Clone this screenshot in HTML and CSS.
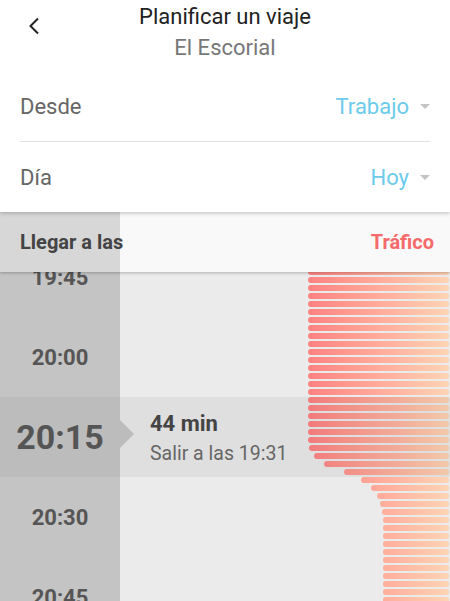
FILE: index.html
```html
<html>
<head>
    <meta charset="utf-8">
    <title>Planificar un viaje</title>
    <link rel="stylesheet" href="styles.css">
</head>
<body>
    <div class="top">
        <div class="header">
            <div class="back">
                <svg width="12" height="18" viewBox="0 0 12 18"><path d="M10 1.5 L2.5 9 L10 16.5" fill="none" stroke="#222" stroke-width="2"/></svg>
            </div>
            <div class="titles">
                <div class="title">Planificar un viaje</div>
                <div class="subtitle">El Escorial</div>
            </div>
            <div></div>
        </div>
        <div class="form">
            <div class="field">
                <span class="label">Desde</span>
                <span class="value">Trabajo<span class="caret"></span></span>
            </div>
            <div class="field">
                <span class="label">Día</span>
                <span class="value">Hoy<span class="caret"></span></span>
            </div>
        </div>
    </div>

    <div class="timeline">
        <div class="bar-head">
            <span class="arrive">Llegar a las</span>
            <span class="traffic">Tráfico</span>
        </div>

        <div class="chart">
            <div class="b" style="margin-left:1px"></div>
            <div class="b" style="margin-left:1px"></div>
            <div class="b" style="margin-left:1px"></div>
            <div class="b" style="margin-left:1px"></div>
            <div class="b" style="margin-left:1px"></div>
            <div class="b" style="margin-left:1px"></div>
            <div class="b" style="margin-left:1px"></div>
            <div class="b" style="margin-left:1px"></div>
            <div class="b" style="margin-left:1px"></div>
            <div class="b" style="margin-left:1px"></div>
            <div class="b" style="margin-left:1px"></div>
            <div class="b" style="margin-left:1px"></div>
            <div class="b" style="margin-left:1px"></div>
            <div class="b" style="margin-left:1px"></div>
            <div class="b" style="margin-left:1px"></div>
            <div class="b" style="margin-left:1px"></div>
            <div class="b" style="margin-left:1px"></div>
            <div class="b" style="margin-left:1px"></div>
            <div class="b" style="margin-left:1px"></div>
            <div class="b" style="margin-left:1px"></div>
            <div class="b" style="margin-left:1px"></div>
            <div class="b" style="margin-left:1px"></div>
            <div class="b" style="margin-left:1px"></div>
            <div class="b" style="margin-left:1px"></div>
            <div class="b" style="margin-left:1px"></div>
            <div class="b" style="margin-left:1px"></div>
            <div class="b" style="margin-left:1px"></div>
            <div class="b" style="margin-left:1px"></div>
            <div class="b" style="margin-left:1px"></div>
            <div class="b" style="margin-left:2px"></div>
            <div class="b" style="margin-left:7px"></div>
            <div class="b" style="margin-left:17px"></div>
            <div class="b" style="margin-left:37px"></div>
            <div class="b" style="margin-left:54px"></div>
            <div class="b" style="margin-left:64px"></div>
            <div class="b" style="margin-left:70px"></div>
            <div class="b" style="margin-left:73px"></div>
            <div class="b" style="margin-left:75px"></div>
            <div class="b" style="margin-left:76px"></div>
            <div class="b" style="margin-left:76px"></div>
            <div class="b" style="margin-left:76px"></div>
            <div class="b" style="margin-left:76px"></div>
            <div class="b" style="margin-left:76px"></div>
            <div class="b" style="margin-left:76px"></div>
            <div class="b" style="margin-left:76px"></div>
            <div class="b" style="margin-left:76px"></div>
            <div class="b" style="margin-left:76px"></div>
            <div class="b" style="margin-left:76px"></div>
            <div class="b" style="margin-left:76px"></div>
        </div>

        <div class="rows">
            <div class="row">
                <div class="time">19:45</div>
                <div class="info"></div>
            </div>
            <div class="row">
                <div class="time">20:00</div>
                <div class="info"></div>
            </div>
            <div class="row sel">
                <div class="time">20:15</div>
                <div class="info">
                    <div class="dur">44 min</div>
                    <div class="leave">Salir a las 19:31</div>
                </div>
            </div>
            <div class="row">
                <div class="time">20:30</div>
                <div class="info"></div>
            </div>
            <div class="row">
                <div class="time">20:45</div>
                <div class="info"></div>
            </div>
        </div>
    </div>
</body>
</html>
```

FILE: styles.css
```css
body {
    margin: 0;
    width: 450px;
    height: 601px;
    overflow: hidden;
    font-family: Roboto, "Liberation Sans", sans-serif;
    background-color: #ebebeb;
}

.top {
    position: relative;
    z-index: 4;
    background-color: white;
    box-shadow: 0 1px 4px rgba(0, 0, 0, 0.25);
}

.header {
    display: grid;
    grid-template-columns: 68px 1fr 68px;
    padding-top: 1px;
}

.back {
    padding: 16px 0 0 28px;
}

.titles {
    text-align: center;
    font-size: 22px;
    line-height: 31px;
}

.title {
    color: #222;
}

.subtitle {
    color: #777;
}

.form {
    padding: 9px 20px 0;
}

.field {
    display: flex;
    justify-content: space-between;
    align-items: center;
    height: 69px;
    font-size: 22px;
}

.field + .field {
    border-top: 1px solid #e2e2e2;
    height: 70px;
}

.label {
    color: #666;
}

.value {
    display: flex;
    align-items: center;
    color: #6ccbea;
}

.caret {
    width: 0;
    height: 0;
    margin-left: 11px;
    border-left: 5px solid transparent;
    border-right: 5px solid transparent;
    border-top: 5px solid #c4c4c4;
}

.timeline {
    position: relative;
    height: 389px;
    overflow: hidden;
    background: linear-gradient(to right, #c4c4c4 120px, #ebebeb 120px);
}

.bar-head {
    position: absolute;
    top: 0;
    left: 0;
    right: 0;
    z-index: 3;
    height: 60px;
    display: flex;
    justify-content: space-between;
    align-items: center;
    padding: 0 16px 0 20px;
    font-size: 20px;
    font-weight: bold;
    background: linear-gradient(to right, #d7d7d7 120px, #f9f9f9 120px);
    box-shadow: 0 1px 3px rgba(0, 0, 0, 0.25);
}

.arrive {
    color: #444;
}

.traffic {
    color: #f56b6b;
}

.chart {
    position: absolute;
    top: 1px;
    left: 307px;
    right: 1px;
    z-index: 1;
    display: flex;
    flex-direction: column;
    gap: 2px;
}

.b {
    height: 6px;
    border-radius: 3px;
    background: linear-gradient(to right, #ff8282 308px, #ffd4b4 450px) fixed;
}

.rows {
    margin-top: 25px;
}

.row {
    display: grid;
    grid-template-columns: 120px 1fr;
    height: 80px;
}

.time {
    display: flex;
    align-items: center;
    justify-content: center;
    background-color: #c4c4c4;
    color: #555;
    font-size: 22px;
    font-weight: bold;
}

.row.sel {
    position: relative;
    z-index: 2;
    background-color: rgba(0, 0, 0, 0.05);
}

.row.sel .time {
    position: relative;
    background-color: #bcbcbc;
    font-size: 34px;
}

.row.sel .time::after {
    content: "";
    position: absolute;
    left: 120px;
    top: 23px;
    border-left: 14px solid #bcbcbc;
    border-top: 14px solid transparent;
    border-bottom: 14px solid transparent;
}

.info {
    padding: 14px 0 0 30px;
}

.dur {
    color: #444;
    font-size: 22px;
    font-weight: bold;
    line-height: 26px;
}

.leave {
    margin-top: 4px;
    color: #666;
    font-size: 19.5px;
    line-height: 26px;
}
```
